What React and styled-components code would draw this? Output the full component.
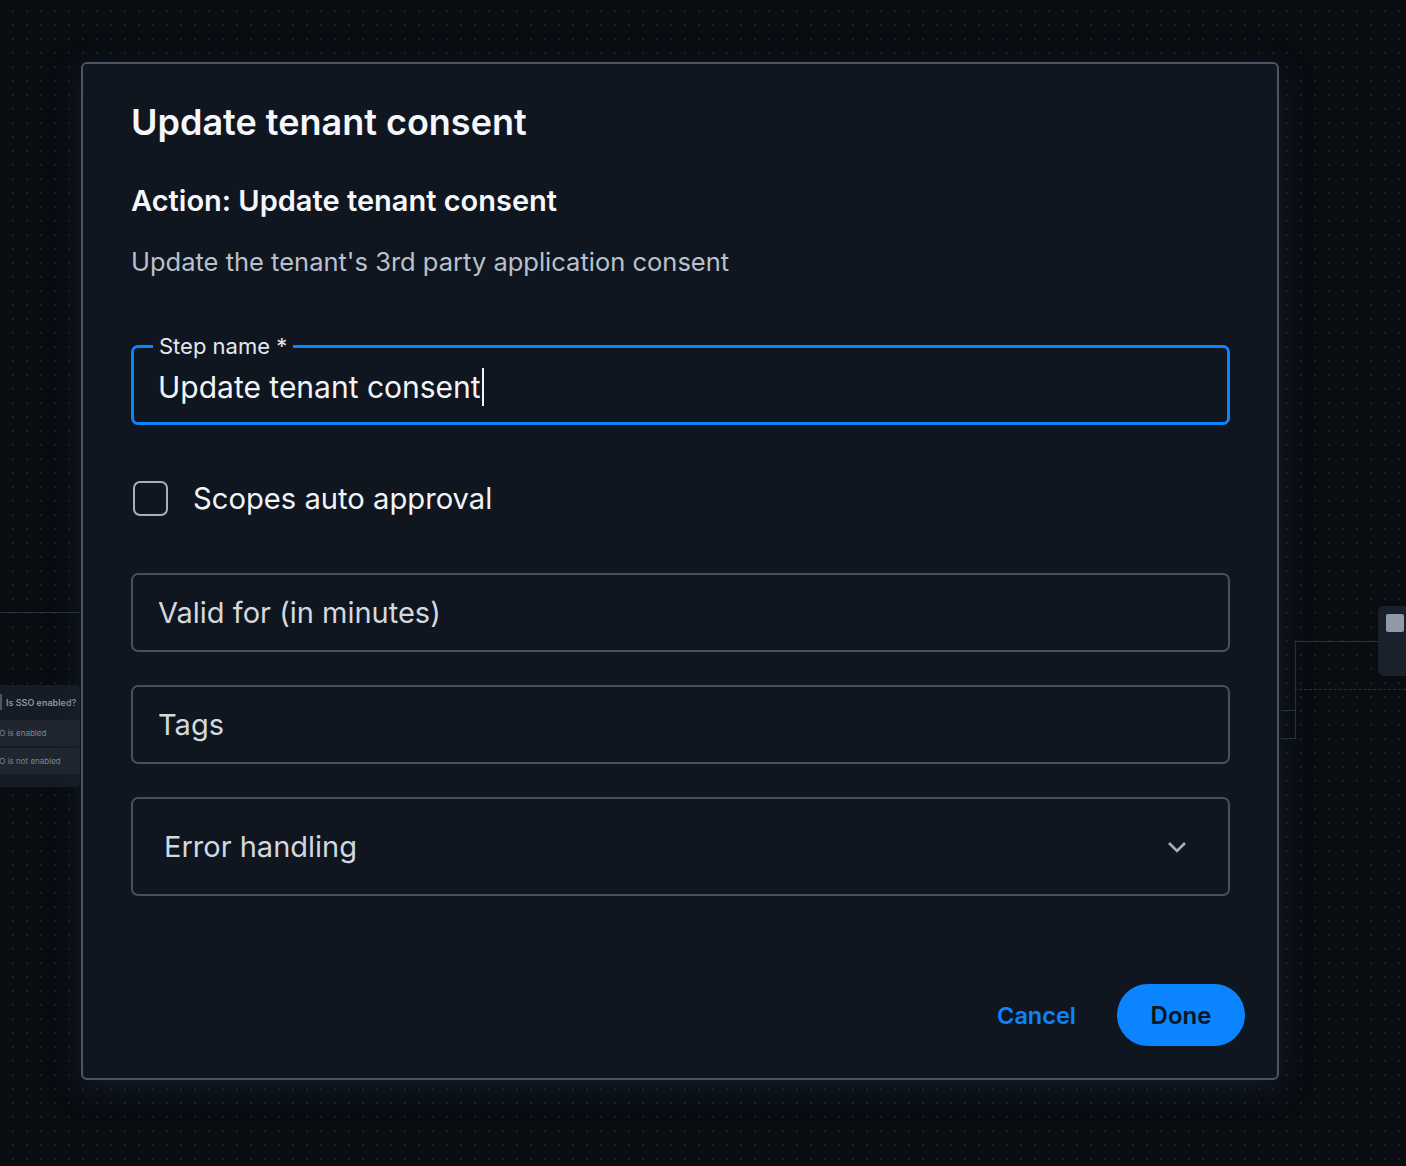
import React from "react";
import styled, { createGlobalStyle } from "styled-components";

const GlobalStyle = createGlobalStyle`
  html, body {
    margin: 0;
    padding: 0;
    background: #090d12;
    font-family: Inter, "Noto Sans", sans-serif;
  }
`;

const Canvas = styled.div`
  position: relative;
  width: 1406px;
  height: 1166px;
  overflow: hidden;
  background-color: #090d12;
  background-image: radial-gradient(circle, rgba(120, 135, 155, 0.16) 1px, transparent 1.2px);
  background-size: 14px 14px;
  background-position: 6px 4px;
`;

const Edge = styled.div`
  position: absolute;
  border-color: #2a323d;
  border-style: solid;
  border-width: 0;
`;

const NodeLeft = styled.div`
  position: absolute;
  left: -60px;
  top: 685px;
  width: 140px;
  height: 102px;
  background: #161c24;
  border-radius: 4px;
  display: flex;
  flex-direction: column;
  gap: 2px;
  padding: 7px 0;
  box-sizing: border-box;
`;

const NodeHead = styled.div`
  display: flex;
  align-items: center;
  gap: 4px;
  height: 20px;
  padding-left: 60px;
  margin-bottom: 6px;
  font-size: 9px;
  font-weight: 600;
  color: #8b95a3;
  &::before {
    content: "";
    width: 2px;
    height: 16px;
    background: #4a5462;
  }
`;

const NodeRow = styled.div`
  height: 26px;
  background: #1f2630;
  display: flex;
  align-items: center;
  padding-left: 49px;
  font-size: 8px;
  color: #7c8694;
  white-space: nowrap;
`;

const NodeRight = styled.div`
  position: absolute;
  left: 1378px;
  top: 606px;
  width: 60px;
  height: 70px;
  background: #1a212a;
  border-radius: 6px;
  padding: 8px;
  box-sizing: border-box;
`;

const NodeBadge = styled.div`
  width: 18px;
  height: 18px;
  border-radius: 2px;
  background: #8f9aa8;
`;

const Modal = styled.div`
  position: absolute;
  left: 81px;
  top: 62px;
  width: 1198px;
  height: 1018px;
  box-sizing: border-box;
  background: #0f1620;
  border: 2px solid #4a5666;
  border-radius: 6px;
  box-shadow: 0 8px 30px rgba(28, 38, 52, 0.55);
  padding: 34px 32px 32px 48px;
  display: flex;
  flex-direction: column;
`;

const Title = styled.h1`
  margin: 0;
  font-size: 36px;
  font-weight: 600;
  color: #f5f7fa;
  line-height: 48px;
`;

const Subtitle = styled.h2`
  margin: 37px 0 0;
  font-size: 29px;
  font-weight: 600;
  color: #f5f7fa;
  line-height: 36px;
`;

const Description = styled.p`
  margin: 26px 0 0;
  font-size: 25.5px;
  color: #b9c1cc;
  line-height: 34px;
`;

const Form = styled.div`
  display: flex;
  flex-direction: column;
  margin-top: 66px;
  margin-right: 15px;
`;

const Field = styled.div`
  position: relative;
  box-sizing: border-box;
  height: ${p => p.h}px;
  border: ${p => (p.focused ? "3px solid #0a84ff" : "2px solid #46505e")};
  border-radius: 7px;
  padding: 0 ${p => (p.focused ? 26 : 27)}px;
  display: flex;
  align-items: center;
  justify-content: space-between;
  margin-top: ${p => p.mt || 0}px;
`;

const FloatLabel = styled.span`
  position: absolute;
  left: 19px;
  top: -15px;
  padding: 0 6px;
  background: #0f1620;
  font-size: 22px;
  line-height: 26px;
  color: #e4e8ee;
`;

const Value = styled.span`
  font-size: ${p => (p.small ? 29 : 30)}px;
  color: ${p => (p.muted ? "#d3d8df" : "#f2f4f7")};
  padding-left: ${p => p.pl || 0}px;
  margin-left: -2px;
  margin-top: ${p => p.mt || 0}px;
  display: flex;
  align-items: center;
`;

const Caret = styled.span`
  display: inline-block;
  width: 2px;
  height: 38px;
  background: #f2f4f7;
  margin-left: 1px;
`;

const CheckRow = styled.label`
  display: flex;
  align-items: center;
  height: 35px;
  gap: 25px;
  margin: 56px 0 57px 2px;
  font-size: 29.2px;
  color: #f2f4f7;
`;

const Box = styled.span`
  width: 35px;
  height: 35px;
  box-sizing: border-box;
  border: 2px solid #a7afba;
  border-radius: 7px;
`;

const Footer = styled.div`
  margin-top: auto;
  display: flex;
  justify-content: flex-end;
  align-items: center;
  gap: 41px;
`;

const TextButton = styled.button`
  background: none;
  border: none;
  padding: 0;
  font-family: inherit;
  font-size: 23.5px;
  font-weight: 600;
  color: #0a84ff;
`;

const PrimaryButton = styled.button`
  width: 128px;
  height: 62px;
  border: none;
  border-radius: 31px;
  background: #0a84ff;
  font-family: inherit;
  font-size: 24px;
  font-weight: 600;
  color: #0b1420;
`;

export default function App() {
  return (
    <>
      <GlobalStyle />
      <Canvas>
        <Edge style={{ left: 0, top: 612, width: 82, borderTopWidth: 1 }} />
        <Edge style={{ left: 1280, top: 641, width: 15, height: 98, borderRightWidth: 1 }} />
        <Edge style={{ left: 1294, top: 641, width: 84, borderTopWidth: 1 }} />
        <Edge style={{ left: 1294, top: 689, width: 112, borderTopWidth: 1, borderStyle: "dashed" }} />
        <Edge style={{ left: 1280, top: 710, width: 15, borderTopWidth: 1 }} />
        <Edge style={{ left: 1280, top: 738, width: 15, borderTopWidth: 1 }} />
        <NodeLeft>
          <NodeHead>Is SSO enabled?</NodeHead>
          <NodeRow>SSO is enabled</NodeRow>
          <NodeRow>SSO is not enabled</NodeRow>
        </NodeLeft>
        <NodeRight>
          <NodeBadge />
        </NodeRight>

        <Modal>
          <Title>Update tenant consent</Title>
          <Subtitle>Action: Update tenant consent</Subtitle>
          <Description>Update the tenant's 3rd party application consent</Description>

          <Form>
            <Field focused h={80}>
              <FloatLabel>Step name *</FloatLabel>
              <Value mt={4}>
                Update tenant consent
                <Caret />
              </Value>
            </Field>

            <CheckRow>
              <Box />
              Scopes auto approval
            </CheckRow>

            <Field h={79}>
              <Value muted small>Valid for (in minutes)</Value>
            </Field>

            <Field h={79} mt={33}>
              <Value muted small>Tags</Value>
            </Field>

            <Field h={99} mt={33}>
              <Value muted small pl={6}>Error handling</Value>
              <svg width="24" height="24" viewBox="0 0 24 24" style={{ marginRight: 12 }}>
                <path d="M4 8l8 8 8-8" fill="none" stroke="#a7afba" strokeWidth="2.6" />
              </svg>
            </Field>
          </Form>

          <Footer>
            <TextButton>Cancel</TextButton>
            <PrimaryButton>Done</PrimaryButton>
          </Footer>
        </Modal>
      </Canvas>
    </>
  );
}
